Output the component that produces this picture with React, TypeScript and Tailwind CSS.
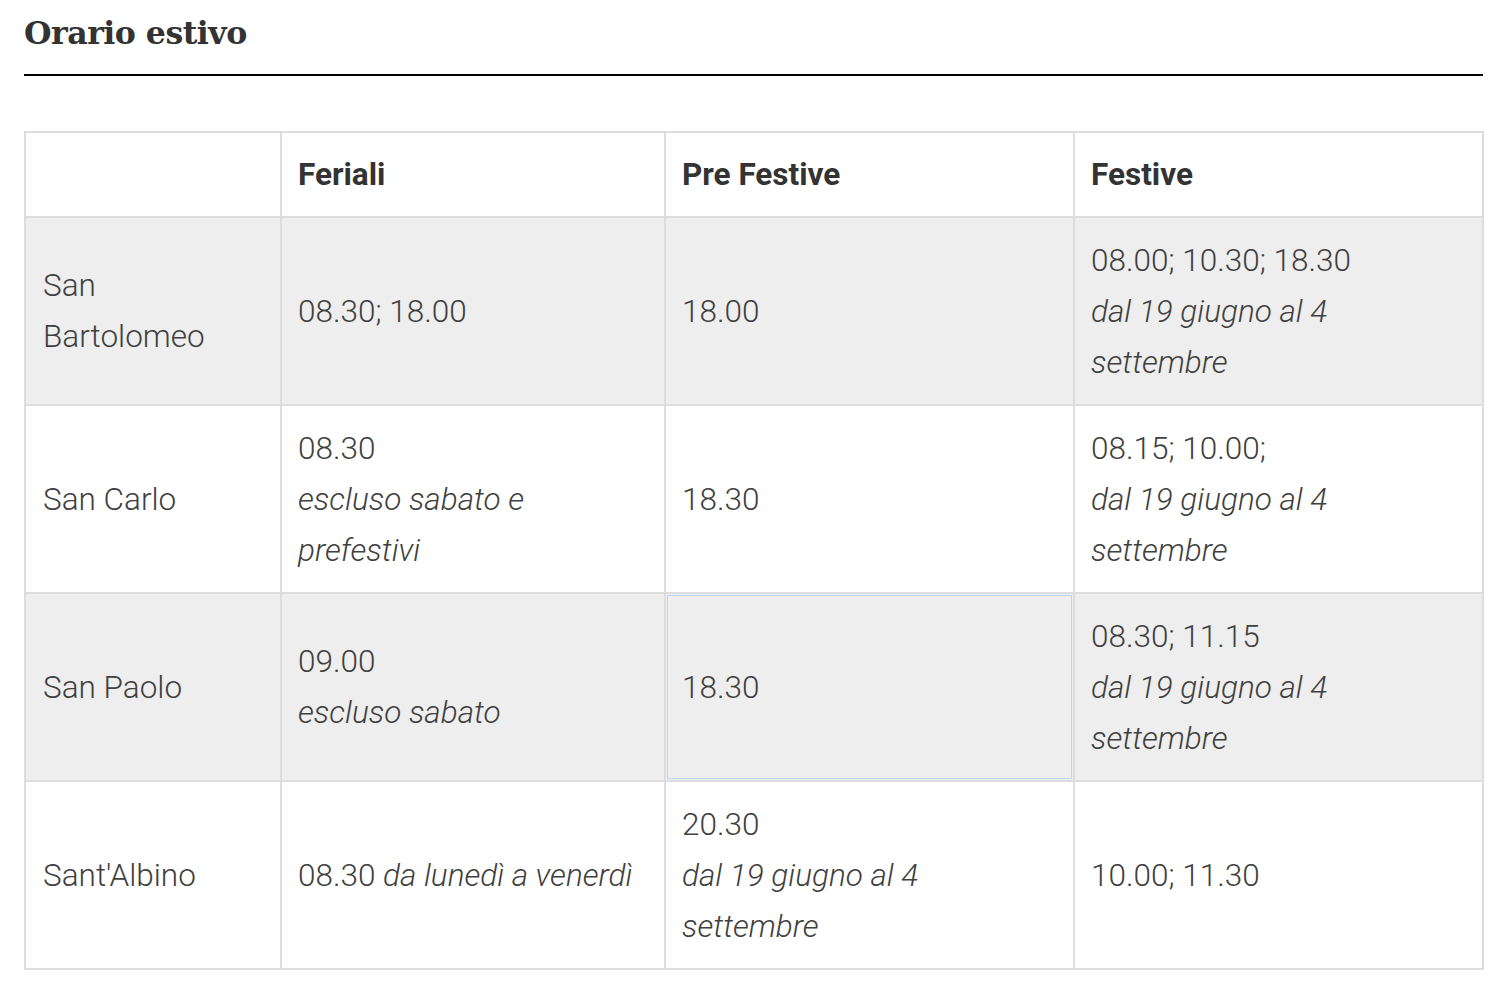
import React from 'react';

type Cell = { main?: string; note?: string[]; inline?: string };

const rows: { name: string[]; cells: Cell[]; shaded: boolean; focus?: number }[] = [
    {
        name: ['San', 'Bartolomeo'],
        shaded: true,
        cells: [
            { main: '08.30; 18.00' },
            { main: '18.00' },
            { main: '08.00; 10.30; 18.30', note: ['dal 19 giugno al 4', 'settembre'] },
        ],
    },
    {
        name: ['San Carlo'],
        shaded: false,
        cells: [
            { main: '08.30', note: ['escluso sabato e', 'prefestivi'] },
            { main: '18.30' },
            { main: '08.15; 10.00;', note: ['dal 19 giugno al 4', 'settembre'] },
        ],
    },
    {
        name: ['San Paolo'],
        shaded: true,
        focus: 1,
        cells: [
            { main: '09.00', note: ['escluso sabato'] },
            { main: '18.30' },
            { main: '08.30; 11.15', note: ['dal 19 giugno al 4', 'settembre'] },
        ],
    },
    {
        name: ["Sant'Albino"],
        shaded: false,
        cells: [
            { main: '08.30', inline: 'da lunedì a venerdì' },
            { main: '20.30', note: ['dal 19 giugno al 4', 'settembre'] },
            { main: '10.00; 11.30' },
        ],
    },
];

const App = () => {
    return (
        <div className="bg-white min-h-[996px] px-6 pt-[9px]" style={{ fontFamily: 'Roboto, "Liberation Sans", sans-serif' }}>
            <div className="w-[1459px]">
                <h2
                    className="text-[31.6px] leading-[48px] font-bold text-[#333333] tracking-[-0.5px]"
                    style={{ fontFamily: '"DejaVu Serif", "Liberation Serif", serif' }}
                >
                    Orario estivo
                </h2>
                <div className="h-[2px] bg-black mt-[17px]"></div>
            </div>

            <table className="table-fixed border-collapse w-[1458px] mt-[55px] text-[31.5px] leading-[51px] text-[#404040] font-light">
                <colgroup>
                    <col className="w-[256px]" />
                    <col className="w-[384px]" />
                    <col className="w-[409px]" />
                    <col className="w-[409px]" />
                </colgroup>
                <thead>
                    <tr className="h-[85px]">
                        <th className="border-2 border-[#dddddd]"></th>
                        {['Feriali', 'Pre Festive', 'Festive'].map((h) => (
                            <th key={h} className="border-2 border-[#dddddd] px-[16px] text-left font-bold text-[#333333] align-middle">
                                {h}
                            </th>
                        ))}
                    </tr>
                </thead>
                <tbody>
                    {rows.map((row) => (
                        <tr key={row.name.join(' ')} className={`h-[188px] ${row.shaded ? 'bg-[#eeeeee]' : 'bg-white'}`}>
                            <td className="border-2 border-[#dddddd] pl-[17px] pr-2 align-middle">
                                {row.name.map((n, i) => (
                                    <div key={i}>{n}</div>
                                ))}
                            </td>
                            {row.cells.map((c, i) => (
                                <td
                                    key={i}
                                    className={`border-2 border-[#dddddd] px-[16px] align-middle ${row.focus === i ? 'outline outline-1 outline-[#bcd7f4] outline-offset-[-3px]' : ''}`}
                                >
                                    <div className="whitespace-nowrap">
                                        {c.main}
                                        {c.inline && <em> {c.inline}</em>}
                                    </div>
                                    {c.note &&
                                        c.note.map((n, j) => (
                                            <div key={j} className="whitespace-nowrap">
                                                <em>{n}</em>
                                            </div>
                                        ))}
                                </td>
                            ))}
                        </tr>
                    ))}
                </tbody>
            </table>
        </div>
    );
};

export default App;
